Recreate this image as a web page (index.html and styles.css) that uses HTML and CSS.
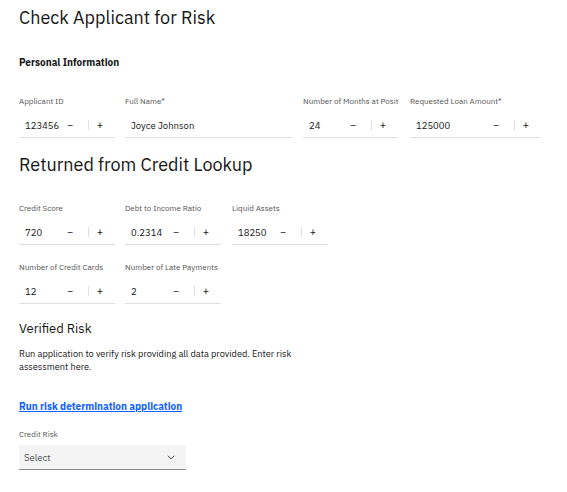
FILE: index.html
```html
<!DOCTYPE html>
<html lang="en">
<head>
<meta charset="utf-8">
<title>Check Applicant for Risk</title>
<link rel="stylesheet" href="styles.css">
</head>
<body>
<main class="page">
  <h1 class="title">Check Applicant for Risk</h1>
  <h3 class="subhead">Personal Information</h3>

  <div class="row row-first">
    <div class="field w96">
      <label class="label">Applicant ID</label>
      <div class="input"><span class="value">123456</span><span class="btn minus">&minus;</span><span class="divider"></span><span class="btn plus">+</span></div>
    </div>
    <div class="field w168">
      <label class="label">Full Name*</label>
      <div class="input"><span class="value">Joyce Johnson</span></div>
    </div>
    <div class="field w95">
      <label class="label">Number of Months at Position</label>
      <div class="input"><span class="value">24</span><span class="btn minus">&minus;</span><span class="divider"></span><span class="btn plus">+</span></div>
    </div>
    <div class="field w131 gap-extra">
      <label class="label">Requested Loan Amount*</label>
      <div class="input"><span class="value">125000</span><span class="btn minus">&minus;</span><span class="divider"></span><span class="btn plus">+</span></div>
    </div>
  </div>

  <h2 class="section">Returned from Credit Lookup</h2>

  <div class="row row-second">
    <div class="field w96">
      <label class="label">Credit Score</label>
      <div class="input"><span class="value">720</span><span class="btn minus">&minus;</span><span class="divider"></span><span class="btn plus">+</span></div>
    </div>
    <div class="field w96">
      <label class="label">Debt to Income Ratio</label>
      <div class="input"><span class="value">0.2314</span><span class="btn minus">&minus;</span><span class="divider"></span><span class="btn plus">+</span></div>
    </div>
    <div class="field w96 gap-one">
      <label class="label">Liquid Assets</label>
      <div class="input"><span class="value">18250</span><span class="btn minus">&minus;</span><span class="divider"></span><span class="btn plus">+</span></div>
    </div>
  </div>

  <div class="row row-third">
    <div class="field w96">
      <label class="label">Number of Credit Cards</label>
      <div class="input"><span class="value">12</span><span class="btn minus">&minus;</span><span class="divider"></span><span class="btn plus">+</span></div>
    </div>
    <div class="field w96">
      <label class="label">Number of Late Payments</label>
      <div class="input"><span class="value">2</span><span class="btn minus">&minus;</span><span class="divider"></span><span class="btn plus">+</span></div>
    </div>
  </div>

  <h4 class="minor">Verified Risk</h4>
  <p class="text">Run application to verify risk providing all data provided. Enter risk assessment here.</p>

  <a class="link" href="#">Run risk determination application</a>

  <div class="field select-field">
    <label class="label">Credit Risk</label>
    <div class="select">
      <span class="select-text">Select</span>
      <svg class="chevron" width="10" height="10" viewBox="0 0 16 16" aria-hidden="true"><path d="M3 6l5 5 5-5" fill="none" stroke="#161616" stroke-width="1.3"/></svg>
    </div>
  </div>
</main>
</body>
</html>
```

FILE: styles.css
```css
* { box-sizing: border-box; }

body {
  margin: 0;
  background: #ffffff;
  color: #161616;
  font-family: "IBM Plex Sans", "Noto Sans", sans-serif;
}

.page {
  padding: 0 19px;
  display: flex;
  flex-direction: column;
  align-items: flex-start;
}

.title {
  margin: 6px 0 0;
  font-size: 18px;
  line-height: 24px;
  font-weight: 400;
  color: #161616;
}

.subhead {
  margin: 26px 0 0;
  font-size: 10px;
  line-height: 14px;
  font-weight: 700;
}

.row {
  display: flex;
  gap: 10px;
  align-items: flex-start;
}

.row-first { margin-top: 25px; }
.row-second { margin-top: 25px; }
.row-third { margin-top: 16px; }

.field {
  display: flex;
  flex-direction: column;
}

.w96 { width: 96px; }
.w168 { width: 168px; }
.w95 { width: 95px; }
.w131 { width: 131px; }
.gap-extra { margin-left: 2px; }
.gap-one { margin-left: 1px; }

.label {
  display: block;
  width: 100%;
  height: 12px;
  line-height: 12px;
  font-size: 8px;
  color: #525252;
  margin-bottom: 6px;
  white-space: nowrap;
  overflow: hidden;
}

.input {
  height: 25px;
  border-bottom: 1px solid #e0e0e0;
  display: flex;
  align-items: center;
  padding: 0 4px 0 6px;
  font-size: 9.5px;
}

.value {
  flex: 1;
  white-space: nowrap;
  overflow: hidden;
}

.btn {
  display: flex;
  justify-content: center;
  font-size: 10.5px;
  color: #161616;
}

.minus { width: 18px; margin-right: 9px; }
.plus { width: 22px; }

.divider {
  width: 1px;
  height: 10px;
  background: #e0e0e0;
}

.section {
  margin: 15px 0 0;
  font-size: 18px;
  line-height: 24px;
  font-weight: 400;
}

.minor {
  margin: 16px 0 0;
  font-size: 13px;
  line-height: 18px;
  font-weight: 400;
}

.text {
  margin: 10px 0 0;
  width: 290px;
  font-size: 9.2px;
  line-height: 13px;
}

.link {
  margin-top: 26px;
  font-size: 10px;
  line-height: 14px;
  font-weight: 700;
  color: #0f62fe;
  text-decoration: underline;
}

.select-field {
  margin-top: 14px;
}

.select-field .label { margin-bottom: 5px; }

.select {
  width: 167px;
  height: 25px;
  background: #f4f4f4;
  border-bottom: 1px solid #8d8d8d;
  display: flex;
  align-items: center;
  justify-content: space-between;
  padding: 0 10px 0 5px;
  font-size: 9.5px;
  color: #525252;
}

.chevron { display: block; }
```
